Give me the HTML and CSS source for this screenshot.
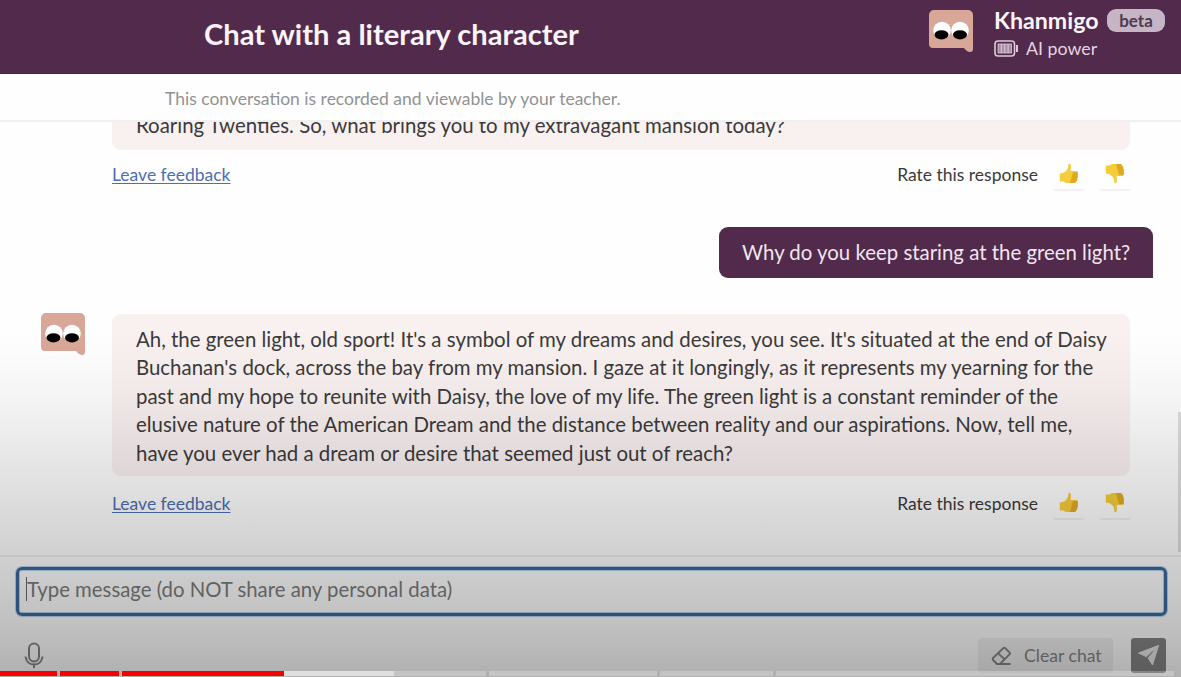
FILE: index.html
```html
<!DOCTYPE html>
<html lang="en">
<head>
    <meta charset="UTF-8">
    <meta name="viewport" content="width=device-width, initial-scale=1.0">
    <title>Khanmigo - Chat with a literary character</title>
    <link rel="stylesheet" href="styles.css">
</head>
<body>
    <!-- shared shapes -->
    <svg class="sprite" aria-hidden="true">
        <symbol id="avatar" viewBox="0 0 44 42">
            <path d="M5 0h34a5 5 0 0 1 5 5v34q0 3-3 3-3 0-6-4H4a4 4 0 0 1-4-4V5a5 5 0 0 1 5-5z" fill="#d9a797"/>
            <ellipse cx="13" cy="20.500" rx="8.800" ry="8.800" fill="#fff"/>
            <ellipse cx="31" cy="20.500" rx="8.800" ry="8.800" fill="#fff"/>
            <ellipse cx="12.500" cy="24.800" rx="7" ry="4.600" fill="#000"/>
            <ellipse cx="31" cy="24.800" rx="7" ry="4.600" fill="#000"/>
        </symbol>
        <symbol id="thumb" viewBox="0 0 20 21">
            <path d="M9.500 1q2-.8 2.400 1.500.2 3-.4 5.500h6q1.500.2 1.500 1.800 0 1.300-.8 1.700.9.700.7 1.900-.2 1-1 1.300.6.800.3 1.800-.3.900-1.200 1.100.3 1.900-1.500 2.400H8q-2.500-.2-3.500-1.400L.8 18.500V10.500L4.500 9.800q3.500-2 4.500-5z" fill="#f5cc3a"/>
            <path d="M14 9h3.500q1.500.2 1.500 1.800 0 1.300-.8 1.700.9.700.7 1.900-.2 1-1 1.300.6.800.3 1.800-.3.900-1.200 1.100-.2 1.400-1.500 1.400H11l1-4z" fill="#dfaa20"/>
        </symbol>
    </svg>

    <div class="app">
        <header class="header">
            <h1>Chat with a literary character</h1>
            <div class="brand">
                <svg class="avatar"><use href="#avatar"/></svg>
                <div class="brand-text">
                    <div class="brand-name"><span class="name">Khanmigo</span><span class="badge">beta</span></div>
                    <div class="power">
                        <svg width="25" height="17" viewBox="0 0 25 17" fill="none" stroke="#dccbd9">
                            <rect x="1" y="1" width="19.500" height="15" rx="3" stroke-width="1.600"/>
                            <rect x="4" y="4" width="13.500" height="9" fill="#a88ca5" stroke-width=".8"/>
                            <path d="M7.300 4v9M10.700 4v9M14.100 4v9"/>
                            <path d="M23 5v7" stroke-width="2"/>
                        </svg>
                        <span>AI power</span>
                    </div>
                </div>
            </div>
        </header>

        <div class="notice">This conversation is recorded and viewable by your teacher.</div>

        <main class="chat">
            <div class="bubble bot first">Roaring Twenties. So, what brings you to my extravagant mansion today?</div>
            <div class="feedback">
                <a href="#">Leave feedback</a>
                <span class="rate">Rate this response</span>
                <button class="vote"><svg><use href="#thumb"/></svg></button>
                <button class="vote down"><svg><use href="#thumb"/></svg></button>
            </div>

            <div class="bubble user">Why do you keep staring at the green light?</div>

            <div class="reply">
                <svg class="avatar"><use href="#avatar"/></svg>
                <div class="bubble bot">
                    Ah, the green light, old sport! It's a symbol of my dreams and desires, you see. It's situated at the end of Daisy<br>
                    Buchanan's dock, across the bay from my mansion. I gaze at it longingly, as it represents my yearning for the<br>
                    past and my hope to reunite with Daisy, the love of my life. The green light is a constant reminder of the<br>
                    elusive nature of the American Dream and the distance between reality and our aspirations. Now, tell me,<br>
                    have you ever had a dream or desire that seemed just out of reach?
                </div>
            </div>
            <div class="feedback last">
                <a href="#">Leave feedback</a>
                <span class="rate">Rate this response</span>
                <button class="vote"><svg><use href="#thumb"/></svg></button>
                <button class="vote down"><svg><use href="#thumb"/></svg></button>
            </div>
            <div class="scrollbar"></div>
        </main>

        <footer class="composer">
            <div class="field"><span class="caret"></span><span class="placeholder">Type message (do NOT share any personal data)</span></div>
            <div class="tools">
                <svg class="mic" width="20" height="27" viewBox="0 0 20 27" fill="none" stroke="#858585" stroke-width="2">
                    <rect x="5" y="1.500" width="10" height="18" rx="5"/>
                    <path d="M1.500 14.500q1 8 8.500 8t8.500-8M10 22.500V26"/>
                </svg>
                <button class="clear">
                    <svg width="21" height="20" viewBox="0 0 21 20" fill="none" stroke="#858585" stroke-width="1.800" stroke-linejoin="round">
                        <path d="M2 12 12.500 2Q13.300 1.200 14.100 2L18.700 6.600Q19.500 7.400 18.700 8.200L9 18H6L2 14Q1.300 13 2 12zM7 7.200l6.800 6.300M9 18h10.500"/>
                    </svg>
                    <span>Clear chat</span>
                </button>
                <button class="send">
                    <svg width="23" height="23" viewBox="0 0 23 23">
                        <path d="M21.500 1.500 1.500 9l8 3.800z" fill="#e8e8e8" stroke="#e8e8e8" stroke-linejoin="round"/>
                        <path d="M21.500 1.500 15.500 21l-4.500-7z" fill="#e8e8e8" stroke="#e8e8e8" stroke-linejoin="round"/>
                        <path d="m10 13.300 6-6" stroke="#858585"/>
                    </svg>
                </button>
            </div>
        </footer>

        <div class="shade"></div>

        <!-- video timeline -->
        <div class="timeline">
            <div class="seg played a"></div>
            <div class="seg played b"></div>
            <div class="seg played c"></div>
            <div class="seg loaded"></div>
            <div class="seg d"></div>
            <div class="seg e"></div>
            <div class="seg f"></div>
            <div class="seg g"></div>
        </div>
    </div>
</body>
</html>
```

FILE: styles.css
```css
* {
    box-sizing: border-box;
}
body {
    margin: 0;
    font-family: Lato, 'Liberation Sans', sans-serif;
    color: #3a3a3a;
    background: #fefefe;
}
button {
    border: none;
    padding: 0;
    font-family: inherit;
}
.sprite {
    display: none;
}
.app {
    position: relative;
    height: 677px;
    display: flex;
    flex-direction: column;
    overflow: hidden;
}
.header {
    flex: none;
    height: 74px;
    padding-left: 204px;
    padding-right: 16px;
    display: flex;
    justify-content: space-between;
    background: #522a4b;
    border-bottom: 1px solid #42283f;
    color: #fbf3fa;
}
h1 {
    margin: 16px 0 0;
    font-size: 29.1px;
    line-height: 36px;
    font-weight: 700;
    white-space: nowrap;
}
.avatar {
    flex: none;
    width: 44px;
    height: 42px;
}
.brand {
    display: flex;
    gap: 21px;
    padding-top: 10px;
}
.brand-text {
    width: 171px;
    margin-top: -2px;
}
.brand-name {
    display: flex;
    justify-content: space-between;
    font-size: 23.2px;
    line-height: 25px;
    font-weight: 700;
}
.badge {
    width: 58px;
    height: 23px;
    margin-top: 1px;
    border-radius: 9px;
    background: #c5b5c5;
    color: #51394f;
    font-size: 17px;
    line-height: 23px;
    text-align: center;
}
.power {
    display: flex;
    align-items: center;
    gap: 7px;
    height: 20px;
    margin-top: 5px;
    font-size: 17.8px;
    color: #e4d5e2;
}
.notice {
    flex: none;
    height: 48px;
    padding-left: 165px;
    font-size: 17.5px;
    line-height: 50px;
    color: #929292;
    border-bottom: 2px solid #f1f0f1;
}
.chat {
    position: relative;
    flex: 1;
    display: flex;
    flex-direction: column;
    justify-content: flex-end;
    padding: 0 28px 0 112px;
    overflow: hidden;
    min-height: 0;
}
.bubble {
    flex: none;
    white-space: nowrap;
}
.bubble.bot {
    width: 1018px;
    padding: 11px 24px 9px;
    border-radius: 9px;
    background: #f9f0f0;
    font-size: 20.42px;
    line-height: 28.5px;
}
.bubble.bot.first {
    padding-bottom: 10px;
}
.bubble.user {
    align-self: flex-end;
    width: 434px;
    height: 51px;
    margin: 34px 0 36px;
    padding-left: 23px;
    border-radius: 9px 9px 0 9px;
    background: #522a4b;
    color: #f1e5ef;
    font-size: 20.4px;
    line-height: 50px;
}
.reply {
    flex: none;
    display: flex;
    gap: 27px;
    margin-left: -71px;
}
.reply .avatar {
    margin-top: -1px;
}
.feedback {
    flex: none;
    display: flex;
    align-items: center;
    height: 43px;
    padding-top: 6px;
    padding-right: 22px;
    font-size: 17.5px;
}
.feedback.last {
    height: 46px;
    padding-top: 8px;
    margin-bottom: 33px;
}
.feedback a {
    color: #4b6eb4;
    text-decoration: underline;
    text-underline-offset: 2px;
}
.rate {
    margin-left: auto;
    margin-right: 15px;
}
.vote {
    width: 32px;
    height: 34px;
    display: flex;
    align-items: center;
    justify-content: center;
    background: transparent;
    border-bottom: 2px solid #f1f1f3;
    border-radius: 3px;
}
.vote + .vote {
    margin-left: 14px;
}
.vote svg {
    width: 20px;
    height: 21px;
}
.vote.down svg {
    transform: scaleY(-1);
}
.scrollbar {
    position: absolute;
    right: 0;
    top: 290px;
    width: 3px;
    height: 140px;
    background: #dedede;
}
.composer {
    flex: none;
    height: 122px;
    padding: 10px 14px 0 16px;
    border-top: 2px solid #f0f0f0;
}
.field {
    height: 49px;
    display: flex;
    align-items: center;
    padding-left: 7px;
    border: 3px solid #3c68a0;
    border-radius: 6px;
    box-shadow: inset 0 0 0 1px #b4d2ea, 0 0 0 1px #bcd2e5;
    font-size: 20.35px;
    color: #7c7c7c;
}
.caret {
    width: 1px;
    height: 24px;
    margin-top: -6px;
    background: #666;
}
.placeholder {
    margin-top: -6px;
}
.tools {
    display: flex;
    align-items: flex-start;
    padding: 22px 1px 0 8px;
}
.mic {
    margin-top: 4px;
}
.clear {
    width: 135px;
    height: 35px;
    margin-left: auto;
    display: flex;
    align-items: center;
    gap: 12px;
    padding-left: 13px;
    border-radius: 4px;
    background: #f0f0f0;
    font-size: 17.6px;
    color: #858585;
}
.send {
    width: 35px;
    height: 35px;
    margin-left: 18px;
    display: flex;
    align-items: center;
    justify-content: center;
    border-radius: 3px;
    background: #858585;
}
/* player controls gradient over the lower half */
.shade {
    position: absolute;
    left: 0;
    right: 0;
    top: 330px;
    bottom: 0;
    background: linear-gradient(rgba(0,0,0,0) 0, rgba(0,0,0,0.03) 60px, rgba(0,0,0,0.12) 160px, rgba(0,0,0,0.18) 225px, rgba(0,0,0,0.26) 310px, rgba(0,0,0,0.31) 347px);
    pointer-events: none;
}
.timeline {
    position: absolute;
    left: 0;
    bottom: 1px;
    width: 1174px;
    height: 5px;
    display: flex;
    gap: 3px;
}
.seg {
    height: 5px;
    background: rgba(255,255,255,0.25);
}
.seg.played {
    background: #f80000;
}
.seg.loaded {
    width: 110px;
    margin-left: -3px;
    background: #dfdfdf;
}
.a { width: 57px; }
.b { width: 59px; }
.c { width: 162px; }
.d { width: 92px; margin-left: -3px; }
.e { width: 168px; }
.f { width: 113px; }
.g { flex: 1; }
```
